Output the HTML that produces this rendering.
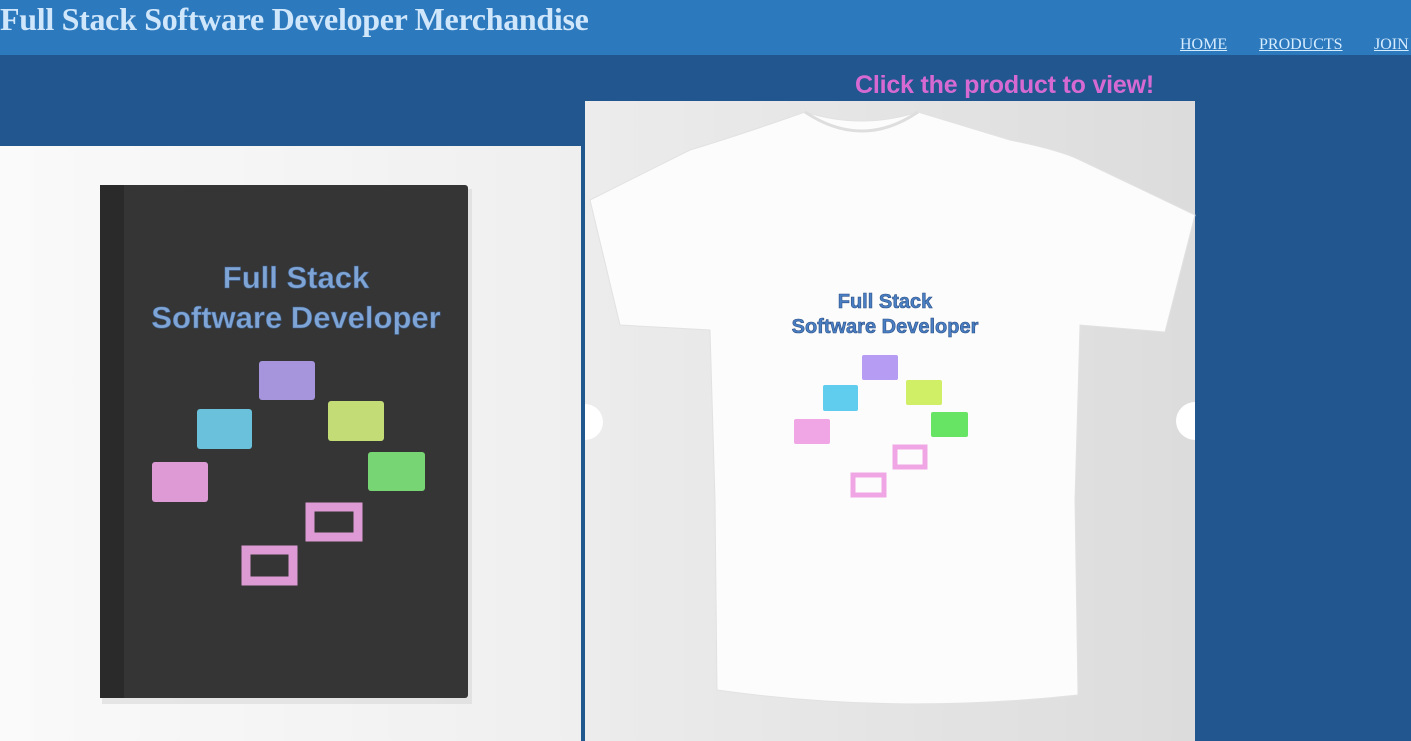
<!DOCTYPE html>
<html><head><meta charset="utf-8"><style>
body{margin:0;width:1411px;height:741px;overflow:hidden;background:#21568f;position:relative;font-family:"Liberation Serif",serif}
.hdr{position:absolute;left:0;top:0;width:1411px;height:55px;background:#2c79bd}
.hdr h1{position:absolute;left:0;top:1px;margin:0;font-size:32px;font-weight:bold;color:#cfe6fb;white-space:nowrap;letter-spacing:-0.3px}
.nav a{position:absolute;top:36px;font-size:16px;color:#d6ecff;text-decoration:underline}
.cta{position:absolute;left:855px;top:71px;font-family:"Liberation Sans",sans-serif;font-weight:bold;font-size:25px;color:#d76ad2;letter-spacing:-0.2px}
</style></head><body>
<div class="hdr"><h1>Full Stack Software Developer Merchandise</h1>
<div class="nav"><a style="left:1180px">HOME</a><a style="left:1259px">PRODUCTS</a><a style="left:1374px">JOIN</a></div></div>
<div class="cta">Click the product to view!</div>
<svg width="1411" height="741" style="position:absolute;left:0;top:0" font-family="Liberation Sans,sans-serif">
<defs><linearGradient id="bg1" x1="0" y1="0" x2="1" y2="0"><stop offset="0" stop-color="#fafafa"/><stop offset="1" stop-color="#efefef"/></linearGradient>
<linearGradient id="bg2" x1="0" y1="0" x2="1" y2="0"><stop offset="0" stop-color="#ececec"/><stop offset="1" stop-color="#dcdcdc"/></linearGradient></defs>
<rect x="0" y="146" width="581" height="595" fill="url(#bg1)"/>
<rect x="102" y="189" width="370" height="515" fill="#d9d9d9" opacity=".6"/>
<rect x="100" y="185" width="368" height="513" rx="3" fill="#353535"/>
<rect x="100" y="185" width="24" height="513" fill="#2a2a2a"/>
<g font-weight="bold" font-size="31" text-anchor="middle" fill="#7fa5d6" stroke="#3e5f8c" stroke-width=".6">
<text x="296" y="288">Full Stack</text><text x="296" y="328">Software Developer</text></g>
<g opacity=".9">
<rect x="259" y="361" width="56" height="39" rx="3" fill="#b39ff0"/>
<rect x="197" y="409" width="55" height="40" rx="3" fill="#6fd1ee"/>
<rect x="328" y="401" width="56" height="40" rx="3" fill="#d4ef7c"/>
<rect x="152" y="462" width="56" height="40" rx="3" fill="#f0a6e6"/>
<rect x="368" y="452" width="57" height="39" rx="3" fill="#7fe87a"/>
<rect x="310" y="507" width="48" height="30" fill="none" stroke="#f0a6e6" stroke-width="9"/>
<rect x="246" y="550" width="47" height="31" fill="none" stroke="#f0a6e6" stroke-width="9"/></g>
<rect x="585" y="101" width="610" height="640" fill="url(#bg2)"/>
<path d="M805 112 Q862 130 918 112 L1010 140 Q1060 150 1080 160 L1195 215 L1165 332 L1080 325 L1075 500 L1078 695 Q895 715 717 690 L715 500 L710 330 L620 325 L590 200 L690 150 Q740 135 805 112 Z" fill="#fcfcfc" stroke="#e2e2e2"/>
<path d="M805 112 Q862 150 918 112" fill="none" stroke="#dedede" stroke-width="3"/>
<g font-weight="bold" font-size="20" text-anchor="middle" fill="#4a7fc4" stroke="#2a4f85" stroke-width=".6">
<text x="885" y="308">Full Stack</text><text x="885" y="333">Software Developer</text></g>
<g opacity=".85">
<rect x="862" y="355" width="36" height="25" rx="2" fill="#a98bf0"/>
<rect x="823" y="385" width="35" height="26" rx="2" fill="#45c5ec"/>
<rect x="906" y="380" width="36" height="25" rx="2" fill="#c9ec4c"/>
<rect x="794" y="419" width="36" height="25" rx="2" fill="#ee98e2"/>
<rect x="931" y="412" width="37" height="25" rx="2" fill="#4fe04a"/>
<rect x="895" y="447" width="30" height="20" fill="none" stroke="#ee98e2" stroke-width="5"/>
<rect x="853" y="475" width="31" height="20" fill="none" stroke="#ee98e2" stroke-width="5"/></g>
<path d="M585 404 A18 18 0 0 1 585 440 Z" fill="#fff"/>
<path d="M1195 402 A18 18 0 0 0 1195 440 Z" fill="#fff"/>
</svg>
</body></html>
